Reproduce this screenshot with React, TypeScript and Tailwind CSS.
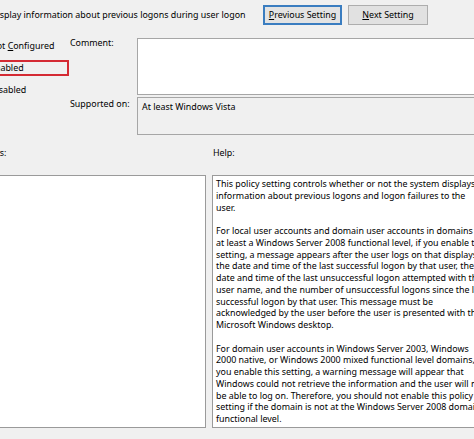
import React from "react";

const helpLines = [
  "This policy setting controls whether or not the system displays",
  "information about previous logons and logon failures to the",
  "user.",
  "",
  "For local user accounts and domain user accounts in domains of",
  "at least a Windows Server 2008 functional level, if you enable this",
  "setting, a message appears after the user logs on that displays",
  "the date and time of the last successful logon by that user, the",
  "date and time of the last unsuccessful logon attempted with that",
  "user name, and the number of unsuccessful logons since the last",
  "successful logon by that user. This message must be",
  "acknowledged by the user before the user is presented with the",
  "Microsoft Windows desktop.",
  "",
  "For domain user accounts in Windows Server 2003, Windows",
  "2000 native, or Windows 2000 mixed functional level domains, if",
  "you enable this setting, a warning message will appear that",
  "Windows could not retrieve the information and the user will not",
  "be able to log on. Therefore, you should not enable this policy",
  "setting if the domain is not at the Windows Server 2008 domain",
  "functional level.",
];

function Radio({ label, u, boxed }: { label: string; u: number; boxed?: boolean }) {
  return (
    <div
      className={
        "flex items-center h-[16px] gap-[7px] " +
        (boxed ? "border-2 border-[#d42a33] w-[100px]" : "")
      }
    >
      <span className="w-[12px] h-[12px] rounded-full border border-[#333] bg-white shrink-0" />
      <span className="whitespace-nowrap">
        {label.slice(0, u)}
        <span className="underline">{label[u]}</span>
        {label.slice(u + 1)}
      </span>
    </div>
  );
}

export default function App() {
  return (
    <div
      className="w-[474px] h-[439px] bg-[#f0f0f0] overflow-hidden text-black text-[8.9px] leading-[12px]"
      style={{ fontFamily: '"Noto Sans", "Open Sans", sans-serif' }}
    >
      <div className="ml-[-30px] w-[560px] flex flex-col">
        {/* header */}
        <div className="flex items-start h-[38px] pt-[5px]">
          <div className="ml-[21px] mt-[2px] leading-[16px] text-[8.9px] w-[272px] whitespace-nowrap overflow-hidden">
            Display information about previous logons during user logon
          </div>
          <button className="h-[20px] w-[79px] border-2 border-[#3a7dc0] bg-[#e3e3e3] flex items-center justify-center whitespace-nowrap">
            <span className="underline">P</span>revious Setting
          </button>
          <button className="ml-[6px] h-[20px] w-[80px] border border-[#adadad] bg-[#e1e1e1] flex items-center justify-center whitespace-nowrap">
            <span className="underline">N</span>ext Setting
          </button>
        </div>

        {/* settings row */}
        <div className="flex">
          <div className="w-[102px] flex flex-col gap-[6px] pl-[1px] ml-[-2px]">
            <div className="pl-[2px]">
              <Radio label="Not Configured" u={4} />
            </div>
            <Radio label="Enabled" u={0} boxed />
            <div className="pl-[2px]">
              <Radio label="Disabled" u={0} />
            </div>
          </div>
          <div className="flex flex-col gap-[2px]">
            <div className="flex">
              <div className="w-[67px] mt-[-1px]">Comment:</div>
              <div className="w-[380px] h-[57px] bg-white border border-[#a6a6a6]" />
            </div>
            <div className="flex">
              <div className="w-[67px] mt-[1px] whitespace-nowrap">Supported on:</div>
              <div className="w-[380px] h-[38px] bg-[#f0f0f0] border border-[#a6a6a6] pl-[4px] pt-[3px] whitespace-nowrap">
                At least Windows Vista
              </div>
            </div>
          </div>
        </div>

        {/* labels */}
        <div className="flex mt-[12px] h-[12px]">
          <div className="w-[243px] pl-[1px]">Options:</div>
          <div className="pl-[0px]">Help:</div>
        </div>

        {/* panes */}
        <div className="flex mt-[16px] gap-[6px]">
          <div className="w-[235px] h-[253px] bg-white border border-[#9a9a9a] ml-[1px]" />
          <div className="w-[300px] h-[253px] bg-white border border-[#9a9a9a] pl-[3px] pt-[2px] overflow-hidden leading-[11.75px]">
            {helpLines.map((l, i) => (
              <div key={i} className="whitespace-nowrap h-[11.75px]">
                {l}
              </div>
            ))}
          </div>
        </div>
      </div>
    </div>
  );
}
